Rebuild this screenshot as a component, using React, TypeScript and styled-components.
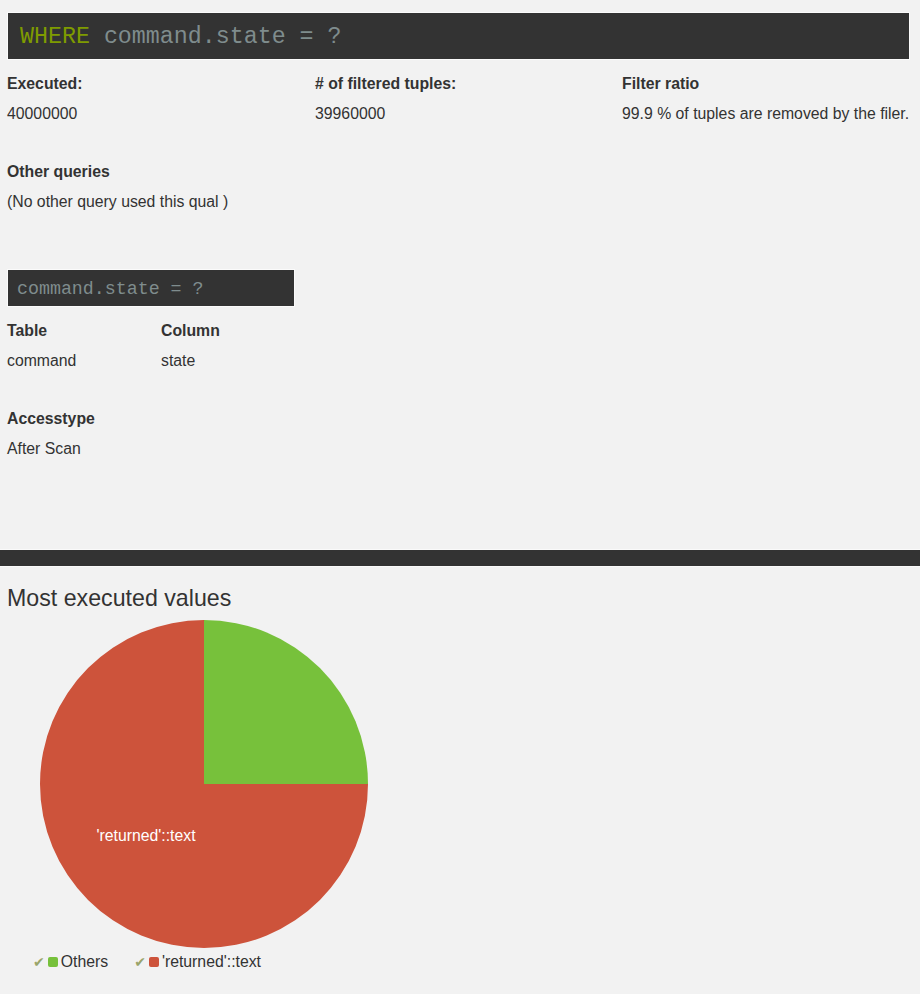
import styled, { createGlobalStyle } from "styled-components";

const GlobalStyle = createGlobalStyle`
    body {
        margin: 0;
        background-color: #f2f2f2;
        color: #333333;
        font-family: "Liberation Sans", Arial, sans-serif;
        font-size: 15.8px;
    }
`;

const GREEN = '#77c13b';
const RED = '#cd533b';

const Page = styled.div`
    width: 920px;
    padding-top: 12px;
`;
const Section = styled.section`
    padding: 0 7px;
`;
const CodeBox = styled.div<{ $big?: boolean }>`
    box-sizing: border-box;
    width: ${props => props.$big ? '903px' : '288px'};
    height: ${props => props.$big ? '48px' : '38px'};
    display: flex;
    align-items: center;
    padding-left: ${props => props.$big ? '12px' : '9px'};
    padding-top: 1px;
    background-color: #333333;
    border: 1px solid #fbfbfb;
    font-family: "Liberation Mono", "Courier New", monospace;
    font-size: ${props => props.$big ? '23.3px' : '18.3px'};
    color: #7f8c8d;
    white-space: pre;
`;
const Keyword = styled.span`
    color: #7f9b00;
`;
const StatsRow = styled.div<{ $cols: string }>`
    display: grid;
    grid-template-columns: ${props => props.$cols};
    margin-top: 9px;
`;
const Field = styled.div`
    line-height: 30px;
`;
const Label = styled.div`
    font-weight: bold;
`;
const Value = styled.div``;
const Block = styled.div<{ $top: number }>`
    margin-top: ${props => props.$top}px;
`;
const Divider = styled.div`
    margin-top: 85px;
    height: 16px;
    background-color: #333333;
    border-top: 1px solid #fafafa;
    border-bottom: 1px solid #fafafa;
`;
const Heading = styled.h2`
    margin: 16px 0 0;
    font-size: 23.2px;
    font-weight: normal;
    line-height: 30px;
`;
const Chart = styled.svg`
    display: block;
    margin-top: 7px;
`;
const Legend = styled.div`
    display: flex;
    gap: 26px;
    padding-left: 26px;
    margin-top: 2px;
    line-height: 24px;
`;
const LegendItem = styled.div`
    display: flex;
    align-items: center;
`;
const Check = styled.span`
    color: #9aa56b;
    font-family: "DejaVu Sans", sans-serif;
    font-size: 14px;
    margin-right: 3px;
`;
const Swatch = styled.span<{ $color: string }>`
    width: 10px;
    height: 10px;
    border-radius: 2px;
    background-color: ${props => props.$color};
    margin-right: 3px;
`;

const stats = [
    { label: 'Executed:', value: '40000000' },
    { label: '# of filtered tuples:', value: '39960000' },
    { label: 'Filter ratio', value: '99.9 % of tuples are removed by the filer.' },
];

const slices = [
    { name: 'Others', value: 0.25, color: GREEN },
    { name: "'returned'::text", value: 0.75, color: RED },
];

function PieChart() {
    const cx = 197, cy = 164, r = 164;
    let start = 0;
    return (
        <Chart width="400" height="328" viewBox="0 0 400 328">
            {slices.map((s) => {
                const a0 = start * 2 * Math.PI;
                const a1 = (start + s.value) * 2 * Math.PI;
                start += s.value;
                const x0 = cx + r * Math.sin(a0), y0 = cy - r * Math.cos(a0);
                const x1 = cx + r * Math.sin(a1), y1 = cy - r * Math.cos(a1);
                const large = s.value > 0.5 ? 1 : 0;
                return (
                    <path key={s.name} fill={s.color}
                        d={`M${cx} ${cy} L${x0} ${y0} A${r} ${r} 0 ${large} 1 ${x1} ${y1} Z`} />
                );
            })}
            <text x="139" y="221" fill="#ffffff" fontSize="15.8"
                fontFamily="Liberation Sans, Arial, sans-serif" textAnchor="middle">
                'returned'::text
            </text>
        </Chart>
    );
}

function App() {
    return (<>
        <GlobalStyle />
        <Page>
            <Section>
                <CodeBox $big><Keyword>WHERE</Keyword> command.state = ?</CodeBox>
                <StatsRow $cols="308px 307px 1fr">
                    {stats.map((s) =>
                    <Field key={s.label}>
                        <Label>{s.label}</Label>
                        <Value>{s.value}</Value>
                    </Field>)}
                </StatsRow>
                <Block $top={28}>
                    <Field>
                        <Label>Other queries</Label>
                        <Value>(No other query used this qual )</Value>
                    </Field>
                </Block>
                <Block $top={52}>
                    <CodeBox>command.state = ?</CodeBox>
                </Block>
                <StatsRow $cols="154px 1fr">
                    <Field>
                        <Label>Table</Label>
                        <Value>command</Value>
                    </Field>
                    <Field>
                        <Label>Column</Label>
                        <Value>state</Value>
                    </Field>
                </StatsRow>
                <Block $top={28}>
                    <Field>
                        <Label>Accesstype</Label>
                        <Value>After Scan</Value>
                    </Field>
                </Block>
            </Section>
            <Divider />
            <Section>
                <Heading>Most executed values</Heading>
                <PieChart />
                <Legend>
                    {slices.map((s) =>
                    <LegendItem key={s.name}>
                        <Check>✔</Check>
                        <Swatch $color={s.color} />
                        {s.name}
                    </LegendItem>)}
                </Legend>
            </Section>
        </Page>
    </>);
}

export default App;
